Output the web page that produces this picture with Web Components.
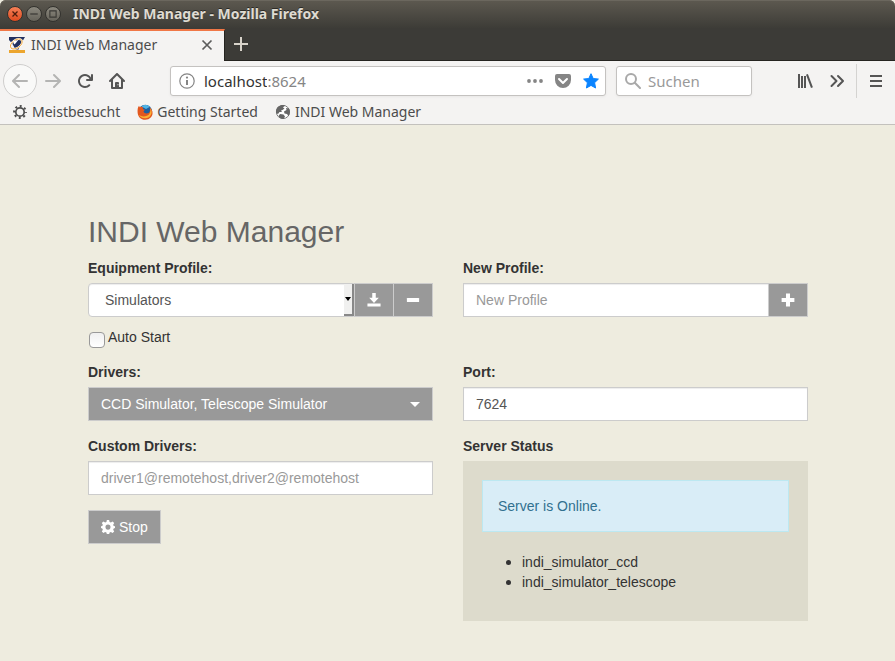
<!DOCTYPE html>
<html lang="de">
<head>
<meta charset="utf-8">
<title>INDI Web Manager</title>
<style>
  html, body { margin: 0; height: 100%; }
  body { background: #eeecdf; }
</style>
</head>
<body>
<app-window></app-window>

<script>
const define = (name, html) => {
  const template = document.createElement('template');
  template.innerHTML = html;
  customElements.define(name, class extends HTMLElement {
    constructor() {
      super();
      this.attachShadow({ mode: 'open' }).append(template.content.cloneNode(true));
    }
  });
};

/* Icon set, all on a 16 unit grid */
const ICONS = {
  back: '<path d="M15 7H3.414l4.293-4.293a1 1 0 0 0-1.414-1.414l-6 6a1 1 0 0 0 0 1.414l6 6a1 1 0 0 0 1.414-1.414L3.414 9H15a1 1 0 0 0 0-2z"/>',
  forward: '<path d="M1 7h11.586L8.293 2.707a1 1 0 0 1 1.414-1.414l6 6a1 1 0 0 1 0 1.414l-6 6a1 1 0 0 1-1.414-1.414L12.586 9H1a1 1 0 0 1 0-2z"/>',
  reload: '<path d="M15 1a1 1 0 0 0-1 1v2.418A6.995 6.995 0 1 0 8 15a6.954 6.954 0 0 0 4.95-2.05 1 1 0 0 0-1.414-1.414A5.019 5.019 0 1 1 12.549 6H10a1 1 0 0 0 0 2h5a1 1 0 0 0 1-1V2a1 1 0 0 0-1-1z"/>',
  home: '<path fill-rule="evenodd" d="M15.707 7.293l-7-7a1 1 0 0 0-1.414 0l-7 7a1 1 0 0 0 1.414 1.414L2 8.414V15a1 1 0 0 0 1 1h10a1 1 0 0 0 1-1V8.414l.293.293a1 1 0 0 0 1.414-1.414zM12 14h-2v-4a1 1 0 0 0-1-1H7a1 1 0 0 0-1 1v4H4V6.414l4-4 4 4zM8.6 11h.8v1.2h-.8z"/>',
  info: '<circle cx="8" cy="8" r="7.2" fill="none" stroke="currentColor" stroke-width="1.2"/><circle cx="8" cy="4.6" r="1.1"/><path d="M7 7h2v5H7z"/>',
  dots: '<circle cx="2" cy="8" r="1.900"/><circle cx="8" cy="8" r="1.900"/><circle cx="14" cy="8" r="1.900"/>',
  pocket: '<path d="M8 15a8 8 0 0 1-8-8V3a2 2 0 0 1 2-2h12a2 2 0 0 1 2 2v4a8 8 0 0 1-8 8zm3.985-10.032a.99.99 0 0 0-.725.319L7.978 8.57 4.755 5.336A.984.984 0 0 0 4 4.968a1 1 0 0 0-.714 1.7l-.016.011 3.293 3.306.707.707a1 1 0 0 0 1.414 0l.707-.707L12.7 6.679a1 1 0 0 0-.715-1.711z"/>',
  star: '<path stroke="currentColor" stroke-linejoin="round" d="M8 .7l2.2 4.8 5.2.6-3.8 3.6 1 5.3L8 12.4 3.400 15l1-5.300L.6 6.100l5.200-.6z"/>',
  search: '<g fill="none" stroke="currentColor" stroke-width="2"><circle cx="6" cy="6" r="5"/><path stroke-linecap="round" d="M9.800 9.800L15 15"/></g>',
  library: '<path d="M1 1h2v14H1zM4 3h2v12H4zM7 3h2v12H7zM9 1.700l1.900-.6 5 13.200-1.900.7z"/>',
  more: '<g fill="none" stroke="currentColor" stroke-width="2" stroke-linecap="round" stroke-linejoin="round"><path d="M2.500 3L7.500 8l-5 5M9 3l5 5-5 5"/></g>',
  menu: '<path d="M2 2h12v2H2zM2 7h12v2H2zM2 12h12v2H2z"/>',
  close: '<path d="M3.500 3.500l9 9M12.500 3.500l-9 9" fill="none" stroke="currentColor" stroke-width="1.700"/>',
  add: '<path d="M8 1v14M1 8h14" fill="none" stroke="currentColor" stroke-width="2"/>',
  gearline: '<g fill="none" stroke="currentColor"><circle cx="8" cy="8" r="4.200" stroke-width="1.700"/><circle cx="8" cy="8" r="5.900" stroke-width="2" stroke-dasharray="2 2.634" stroke-dashoffset="1"/></g>',
  globe: '<circle cx="8" cy="8" r="6.600" fill="#fff" stroke="#777" stroke-width="1"/><path fill="#666" d="M3 2.800C5.500.500 9 .700 10 1.500L8 3.500l1.500 1L7.500 6 6 6.500 7 8H4.500L3 10 1 9C.800 6 1.500 4 3 2.800zM11 4l3 .500c1.500 3 .800 6-.500 7.500L12 10 9.500 9.500 9 7.500 11.500 6zM5 10l3.500.500L10 12.500 8.500 15C6 15 4 13.500 3.500 12z"/>',
  firefox: '<circle cx="8.300" cy="7.500" r="6.800" fill="#1d5f9f"/><path fill="#4fb4e6" d="M4.500 2.500C7 .500 11 .500 12.500 3L9 5z"/><path fill="#e3571f" d="M.6 6C.7 4 1.500 2.500 2 1.800l.8 1.500C4 2.500 5.500 3 6 3.200L5.800 5l2 .8L6.500 7.500c.5 2 3.500 2.500 5 1.500 1.500-1 2-3.500 1-5.500 3.500 2 4 7 1.500 9.800C11 16.700 5.500 16.500 2.500 13.500.7 11.500.4 8.500.6 6z"/><path fill="#fbb034" d="M13.500 4c2.500 4.500.5 9-3.500 10-4 1-7-.8-8-3 2 1.500 5 2 8 .8 2.500-1.200 4-3.800 3.500-7.800z"/>',
  indi: '<path fill="#22305f" d="M0 0h16l-4.500 7.500L9.500 12.500H6.500L3.500 7 0 3z"/><ellipse cx="7.300" cy="7" rx="6.600" ry="4" transform="rotate(-35 7.300 7)" fill="none" stroke="#fff" stroke-width="1.800"/><ellipse cx="7.300" cy="7" rx="6.600" ry="4" transform="rotate(-35 7.300 7)" fill="none" stroke="#f0a02c" stroke-width=".900"/><path fill="#fff" d="M4 3l3 1 3-2-3.500 4.500L5 7.500z"/><path fill="#eca52d" d="M0 13h16v3H0z"/>',
  download: '<path d="M6 0h4v5.500h3.500L8 11.500 2.500 5.500H6zM.500 12h15v3.500H.500z"/>',
  minus: '<rect x="1" y="5.700" width="14" height="4.600" rx=".700"/>',
  plus: '<path d="M5.700.700h4.600v5h5v4.600h-5v5H5.700v-5h-5V5.700h5z"/>',
  gear: '<path fill-rule="evenodd" d="M6.700 0h2.600l.5 2.200 1.500.6 1.900-1.200 1.900 1.900L13.900 5.400l.6 1.400 2 .4v1.900l-2 .5-.6 1.500 1.200 1.900-1.900 1.900-1.900-1.200-1.500.6-.5 2H6.700l-.5-2-1.500-.6-1.900 1.200L.9 13l1.200-1.900-.6-1.500-2-.5V7.200l2-.4.6-1.400L.9 3.500l1.900-1.900 1.900 1.200 1.500-.6zM8 5.200a2.900 2.900 0 1 0 0 5.800 2.900 2.900 0 0 0 0-5.800z"/>',
  wclose: '<path d="M4 4l8 8M12 4l-8 8" fill="none" stroke="currentColor" stroke-width="2"/>',
  wmin: '<path d="M2 7h12v2H2z"/>',
  wmax: '<path d="M3 3h10v10H3z" fill="none" stroke="currentColor" stroke-width="1.800"/>',
};

customElements.define('ui-icon', class extends HTMLElement {
  constructor() {
    super();
    this.attachShadow({ mode: 'open' });
  }
  connectedCallback() {
    this.shadowRoot.innerHTML = `<style>
      :host { display: block; flex: none; width: var(--icon-size, 16px); height: var(--icon-size, 16px); }
      svg { display: block; width: 100%; height: 100%; fill: currentColor; }
    </style><svg viewBox="0 0 16 16" aria-hidden="true">${ICONS[this.getAttribute('name')]}</svg>`;
  }
});

define('title-bar', `<style>
  :host { display: flex; align-items: center; height: 28px; padding: 0 7px; box-sizing: border-box;
    border-radius: 6px 6px 0 0; background: linear-gradient(#5d5950, #3d3c37);
    box-shadow: inset 0 1px #6b675e; color: #dfdbd2; }
  .controls { display: flex; gap: 3px; margin-right: 12px; }
  button { all: unset; box-sizing: border-box; display: grid; place-items: center; width: 16px; height: 16px;
    border-radius: 50%; border: 1px solid #33322e; background: linear-gradient(#8b887e, #66635a); color: #3a3935; --icon-size: 10px; }
  button.close { background: linear-gradient(#f58057, #df4b1f); color: #4c1d0c; }
  h1 { margin: 0; font: bold 14px/20px "Noto Sans", sans-serif; text-shadow: 0 -1px #2b2a26; white-space: nowrap; }
</style>
<div class="controls">
  <button class="close" aria-label="Schließen"><ui-icon name="wclose"></ui-icon></button>
  <button aria-label="Minimieren"><ui-icon name="wmin"></ui-icon></button>
  <button aria-label="Maximieren"><ui-icon name="wmax"></ui-icon></button>
</div>
<h1><slot></slot></h1>`);

define('tab-strip', `<style>
  :host { display: flex; height: 33px; box-sizing: border-box; background: #3c3b37; border-bottom: 1px solid #252420; }
  .tab { display: flex; align-items: center; box-sizing: border-box; width: 225px; height: 32px; margin-top: 1px;
    padding: 0 9px 2px; gap: 6px; border-top: 2px solid #f07746; border-right: 1px solid #252420; background: #f4f3f2; color: #4c4c4c; }
  .tab span { flex: 1; font: 14px/20px "Noto Sans", sans-serif; white-space: nowrap; }
  button { all: unset; display: grid; place-items: center; color: #5c5c5c; }
  .close { width: 16px; }
  .add { width: 32px; color: #d8d3ca; }
</style>
<div class="tab" role="tab" aria-selected="true">
  <ui-icon name="indi"></ui-icon><span><slot></slot></span>
  <button class="close" aria-label="Tab schließen"><ui-icon name="close"></ui-icon></button>
</div>
<button class="add" aria-label="Neuer Tab"><ui-icon name="add"></ui-icon></button>`);

define('nav-bar', `<style>
  :host { display: flex; align-items: center; height: 40px; padding: 0 3px; background: #f4f3f2; color: #555;
    font: 15px/20px "Noto Sans", sans-serif; }
  button { all: unset; display: grid; place-items: center; flex: none; width: 32px; height: 32px; }
  button:disabled { color: #b4b4b3; }
  .back { box-sizing: border-box; width: 34px; height: 34px; border: 1px solid #cfcecd; border-radius: 50%; background: #f9f9f8; }
  .gap { flex: 0 1 37px; }
  .field { display: flex; align-items: center; box-sizing: border-box; height: 30px; min-width: 0;
    border: 1px solid #c4c2c0; border-radius: 3px; background: #fff; box-shadow: 0 1px 3px #0000000d; }
  .url { flex: 1; padding: 0 3px 0 8px; color: #858585; }
  .url label { display: flex; flex: 1; align-items: center; margin-left: 9px; }
  .find { width: 136px; margin-left: 10px; padding: 0 8px; gap: 7px; color: #a9a9a9; }
  input { all: unset; font: inherit; min-width: 0; }
  input::placeholder { color: #999; opacity: 1; }
  .url input { field-sizing: content; color: #333; }
  .find input { flex: 1; }
  .field button { width: 28px; }
  .field .mark { width: 22px; padding-left: 3px; color: #0a84ff; }
  .line { width: 1px; height: 34px; margin: 0 3px; background: #d4d3d1; }
</style>
<button class="back" disabled aria-label="Zurück"><ui-icon name="back"></ui-icon></button>
<button disabled aria-label="Vor"><ui-icon name="forward"></ui-icon></button>
<button aria-label="Neu laden"><ui-icon name="reload"></ui-icon></button>
<button aria-label="Startseite"><ui-icon name="home"></ui-icon></button>
<div class="gap"></div>
<div class="field url">
  <ui-icon name="info"></ui-icon>
  <label><input aria-label="Adresse" value="localhost"><span>:8624</span></label>
  <button aria-label="Seitenaktionen"><ui-icon name="dots"></ui-icon></button>
  <button aria-label="Pocket"><ui-icon name="pocket"></ui-icon></button>
  <button class="mark" aria-label="Lesezeichen"><ui-icon name="star"></ui-icon></button>
</div>
<div class="field find"><ui-icon name="search"></ui-icon><input type="search" placeholder="Suchen" aria-label="Suchen"></div>
<div class="gap"></div>
<button aria-label="Bibliothek"><ui-icon name="library"></ui-icon></button>
<button aria-label="Mehr Werkzeuge"><ui-icon name="more"></ui-icon></button>
<div class="line"></div>
<button aria-label="Menü"><ui-icon name="menu"></ui-icon></button>`);

define('bookmark-bar', `<style>
  :host { display: flex; gap: 17px; height: 21px; padding: 0 12px 2px; background: #f4f3f2; border-bottom: 1px solid #c3c1bd; }
  a { display: flex; align-items: center; gap: 4px; color: #4c4c4c; text-decoration: none;
    font: 14px/20px "Noto Sans", sans-serif; white-space: nowrap; }
</style>
<a href="#"><ui-icon name="gearline"></ui-icon>Meistbesucht</a>
<a href="#"><ui-icon name="firefox"></ui-icon>Getting Started</a>
<a href="#"><ui-icon name="globe"></ui-icon>INDI Web Manager</a>`);

const CONTROL = `
  label { display: block; margin-bottom: 5px; font-weight: bold; }
  input, select, button { box-sizing: border-box; height: 34px; margin: 0; border: 1px solid #ccc; border-radius: 0; font: inherit; }
  input { width: 100%; min-width: 0; padding: 6px 12px; background: #fff; color: #555; box-shadow: inset 0 1px 1px #00000013; }
  input::placeholder { color: #999; opacity: 1; }
  select { appearance: none; width: 100%; }
  button { display: flex; align-items: center; justify-content: center; background: #999; color: #fff; --icon-size: 14px; }
  .row { display: flex; }
  .pick { position: relative; flex: 1; }
`;

define('profile-select', `<style>${CONTROL}
  :host { display: block; }
  button { width: 40px; padding: 0; }
  button + button { margin-left: -1px; }
  select { padding: 6px 16px; border-radius: 4px 0 0 4px; background: #fff; color: #555; box-shadow: inset 0 1px 1px #00000013; }
  .arrow { position: absolute; top: 1px; right: 0; bottom: 1px; box-sizing: border-box; width: 10px; display: grid; place-items: center;
    border: solid #888; border-width: 0 2px 2px 0; background: #f0f0ef; pointer-events: none; }
  .arrow svg { width: 6px; height: 4px; }
</style>
<label for="profile">Equipment Profile:</label>
<div class="row">
  <div class="pick">
    <select id="profile"><option>Simulators</option></select>
    <span class="arrow"><svg viewBox="0 0 6 4"><path d="M0 0h6L3 4z"/></svg></span>
  </div>
  <button aria-label="Save profile"><ui-icon name="download"></ui-icon></button>
  <button aria-label="Delete profile"><ui-icon name="minus"></ui-icon></button>
</div>`);

define('new-profile', `<style>${CONTROL}
  :host { display: block; }
  button { width: 40px; padding: 0; margin-left: -1px; flex: none; }
</style>
<label for="name">New Profile:</label>
<div class="row">
  <input id="name" placeholder="New Profile">
  <button aria-label="Add profile"><ui-icon name="plus"></ui-icon></button>
</div>`);

define('auto-start', `<style>
  :host { display: block; }
  label { display: flex; gap: 3px; height: 20px; }
  input { appearance: none; box-sizing: border-box; width: 16px; height: 16px; margin: 5px 0 0 1px; border: 1px solid #999;
    border-radius: 4px; background: linear-gradient(#f0f0f0, #fff); }
</style>
<label><input type="checkbox">Auto Start</label>`);

define('driver-select', `<style>${CONTROL}
  :host { display: block; }
  select { display: block; padding: 6px 12px; background: #999; color: #fff; }
  .caret { position: absolute; top: 15px; right: 13px; width: 10px; height: 5px; pointer-events: none; }
</style>
<label for="drivers">Drivers:</label>
<div class="pick">
  <select id="drivers"><option>CCD Simulator, Telescope Simulator</option></select>
  <svg class="caret" viewBox="0 0 10 5"><path fill="#fff" d="M0 0h10L5 5z"/></svg>
</div>`);

customElements.define('text-field', class extends HTMLElement {
  connectedCallback() {
    const root = this.attachShadow({ mode: 'open' });
    root.innerHTML = `<style>${CONTROL} :host { display: block; } input { display: block; }</style>
      <label for="field">${this.getAttribute('label')}</label><input id="field">`;
    const input = root.querySelector('input');
    input.placeholder = this.getAttribute('placeholder') || '';
    input.value = this.getAttribute('value') || '';
  }
});

define('server-toggle', `<style>${CONTROL}
  :host { display: block; }
  button { gap: 4px; padding: 6px 12px; }
</style>
<button><ui-icon name="gear"></ui-icon><slot></slot></button>`);

define('server-status', `<style>
  :host { display: block; }
  h2 { margin: 0 0 5px; font: inherit; font-weight: bold; }
  .well { padding: 19px; background: #dddbcc; }
  .alert { margin-bottom: 20px; padding: 15px; border: 1px solid #bce8f1; background: #d9edf7; color: #31708f; }
  ul { margin: 0 0 10px; padding-left: 40px; }
  li { height: 20px; }
  li::marker { font-size: 16px; }
</style>
<h2>Server Status</h2>
<div class="well">
  <div class="alert" role="status">Server is Online.</div>
  <ul><li>indi_simulator_ccd</li><li>indi_simulator_telescope</li></ul>
</div>`);

define('web-manager', `<style>
  :host { display: block; padding: 90px 15px 40px 16px; color: #333; font: 14px/20px "Liberation Sans", Arial, sans-serif; }
  main { max-width: 720px; margin: 0 auto; }
  h1 { margin: 0 0 10px; font-size: 30px; font-weight: normal; line-height: 33px; color: #666; }
  .grid { display: grid; grid-template-columns: minmax(0, 1fr) minmax(0, 1fr); column-gap: 30px; row-gap: 15px; }
  .stack { display: grid; gap: 10px; }
  .column { display: grid; gap: 15px; align-content: start; }
</style>
<main>
  <h1>INDI Web Manager</h1>
  <div class="grid">
    <div class="stack"><profile-select></profile-select><auto-start></auto-start></div>
    <new-profile></new-profile>
    <driver-select></driver-select>
    <text-field label="Port:" value="7624"></text-field>
    <div class="column">
      <text-field label="Custom Drivers:" placeholder="driver1@remotehost,driver2@remotehost"></text-field>
      <server-toggle>Stop</server-toggle>
    </div>
    <server-status></server-status>
  </div>
</main>`);

define('app-window', `<style>
  :host { display: block; min-height: 100%; background: #eeecdf; }
</style>
<title-bar>INDI Web Manager - Mozilla Firefox</title-bar>
<tab-strip>INDI Web Manager</tab-strip>
<nav-bar></nav-bar>
<bookmark-bar></bookmark-bar>
<web-manager></web-manager>`);
</script>
</body>
</html>
